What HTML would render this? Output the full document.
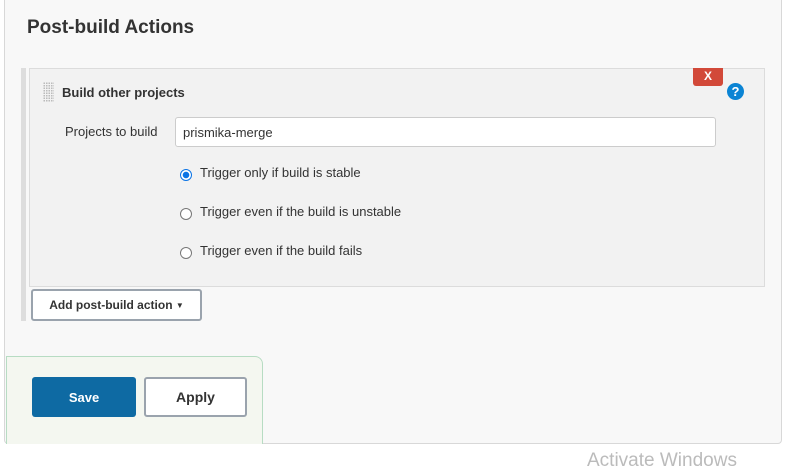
<!DOCTYPE html>
<html><head><style>
*{margin:0;padding:0;box-sizing:border-box}
body{width:799px;height:466px;background:#fff;font-family:"Liberation Sans",sans-serif;position:relative;overflow:hidden;color:#333}
.a{position:absolute}
.outer{left:4px;top:-2px;width:778px;height:446px;background:#f8f8f8;border:1px solid #d8d8d8;border-radius:0 0 4px 4px}
.h{left:27px;top:17px;font-size:19px;font-weight:bold;color:#333}
.bar{left:21px;top:68px;width:5px;height:253px;background:#ddd}
.box{left:29px;top:68px;width:736px;height:219px;background:#f2f2f2;border:1px solid #dcdcdc}
.grip{left:43px;top:82px;width:11px;height:20px;background-image:radial-gradient(#bbb 0.8px,transparent 0.9px);background-size:2.5px 2.5px}
.t{font-size:13px}
.radio{width:12px;height:12px;border-radius:50%;border:1px solid #777;background:#fff}
.btn{border:2px solid #9aa3ad;border-radius:3px;background:#fff;font-weight:bold;display:flex;align-items:center;justify-content:center}
</style></head><body>
<div class="a outer"></div>
<div class="a h">Post-build Actions</div>
<div class="a bar"></div>
<div class="a box"></div>
<div class="a grip"></div>
<div class="a t" style="left:62px;top:85px;font-weight:bold">Build other projects</div>
<div class="a" style="left:693px;top:68px;width:30px;height:18px;background:#d24939;border-radius:0 0 3px 3px;color:#fff;font-weight:bold;font-size:12px;text-align:center;line-height:17px">X</div>
<div class="a" style="left:727px;top:83px;width:17px;height:17px;border-radius:50%;background:#0b84d4;color:#fff;font-weight:bold;font-size:13px;text-align:center;line-height:17px">?</div>
<div class="a t" style="left:65px;top:124px;color:#333">Projects to build</div>
<div class="a t" style="left:175px;top:117px;width:541px;height:30px;background:#fff;border:1px solid #ccc;border-radius:3px;padding:7px 0 0 7px">prismika-merge</div>
<div class="a radio" style="left:180px;top:169px;border:1px solid #0b74e5;background:radial-gradient(#0b74e5 3px,#fff 3.5px)"></div>
<div class="a t" style="left:200px;top:165px">Trigger only if build is stable</div>
<div class="a radio" style="left:180px;top:208px"></div>
<div class="a t" style="left:200px;top:204px">Trigger even if the build is unstable</div>
<div class="a radio" style="left:180px;top:247px"></div>
<div class="a t" style="left:200px;top:243px">Trigger even if the build fails</div>
<div class="a btn" style="left:31px;top:289px;width:171px;height:32px;font-size:12px;color:#333">Add post-build action&nbsp;<span style="font-size:8px">▼</span></div>
<div class="a" style="left:6px;top:356px;width:257px;height:88px;background:#f4f7f0;border:1px solid #b7dcc3;border-bottom:none;border-radius:0 8px 0 0"></div>
<div class="a" style="left:32px;top:377px;width:104px;height:40px;background:#0e6aa3;border-radius:3px;color:#fff;font-weight:bold;font-size:13px;display:flex;align-items:center;justify-content:center">Save</div>
<div class="a btn" style="left:144px;top:377px;width:103px;height:40px;font-size:14px;color:#333">Apply</div>
<div class="a" style="left:587px;top:450px;font-size:19px;color:#bbb">Activate Windows</div>
</body></html>
